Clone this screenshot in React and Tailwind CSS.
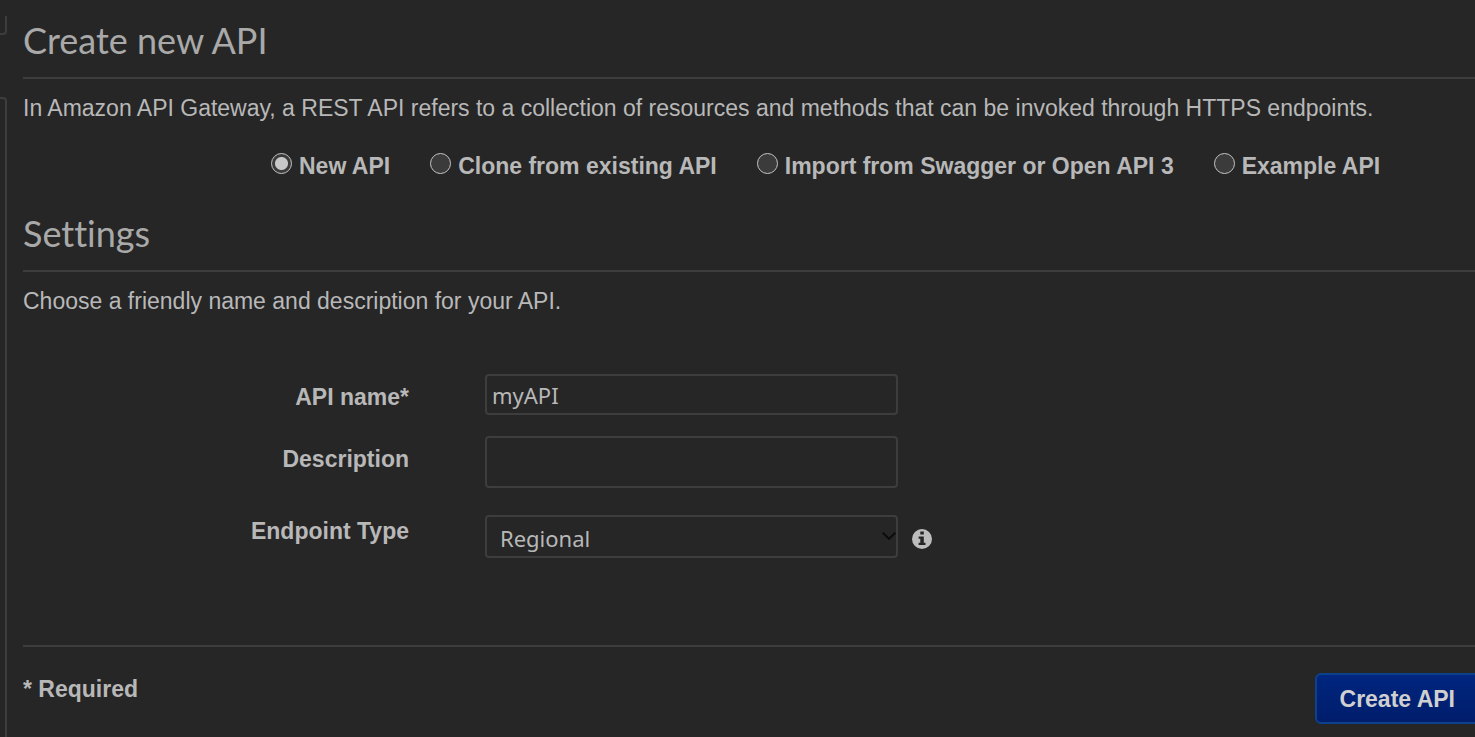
import React from "react";

const SOURCES = [
  { id: "new", label: "New API" },
  { id: "clone", label: "Clone from existing API" },
  { id: "import", label: "Import from Swagger or Open API 3" },
  { id: "example", label: "Example API" },
];

function SectionTitle({ as: Tag, children }) {
  return (
    <Tag className="border-b-2 border-[#3d3d3d] pb-[13px] font-['Lato',sans-serif] text-4xl leading-[48px] text-[#a9a9a9] [font-variant-ligatures:none]">
      {children}
    </Tag>
  );
}

function Label({ htmlFor, className = "pt-[7px]", children }) {
  return (
    <label
      htmlFor={htmlFor}
      className={`w-[386px] shrink-0 text-right leading-8 font-bold ${className}`}
    >
      {children}
    </label>
  );
}

function InfoIcon() {
  return (
    <svg viewBox="0 0 20 20" className="size-5" aria-hidden="true">
      <circle cx="10" cy="10" r="10" fill="#bdbdbd" />
      <path
        fill="#262626"
        d="M8.3 2.6h3.5v2.8H8.3zM6.6 7.4h5.2v6.3h1.7v2.4H6.6v-2.4h1.7V9.8H6.6z"
      />
    </svg>
  );
}

export default function App() {
  return (
    <div className="flex min-h-screen overflow-hidden bg-[#262626] font-['Liberation_Sans',Arial,sans-serif] text-[23px] leading-9 text-[#b8b8b8]">
      <aside className="flex w-[7px] shrink-0 flex-col gap-[62px] pt-4">
        <div className="h-[19px] rounded-br-sm border-r-2 border-b-2 border-[#3d3d3d]" />
        <div className="grow rounded-tr-sm border-t-2 border-r-2 border-[#3d3d3d]" />
      </aside>

      <main className="min-w-0 grow pt-4 pl-4">
        <SectionTitle as="h1">Create new API</SectionTitle>
        <p className="pt-[11px] whitespace-nowrap">
          In Amazon API Gateway, a REST API refers to a collection of resources and methods that can
          be invoked through HTTPS endpoints.
        </p>

        <div className="flex gap-10 pt-[22px] pl-[248px] font-bold whitespace-nowrap">
          {SOURCES.map((source) => (
            <label key={source.id} className="flex items-start gap-[7px]">
              <input
                type="radio"
                name="source"
                value={source.id}
                defaultChecked={source.id === "new"}
                className="mt-[5px] size-[21px] shrink-0 appearance-none rounded-full border border-[#c4c4c4] bg-[#3b3b3b] checked:bg-[radial-gradient(circle,#c8c8c8_6px,#3b3b3b_7px)]"
              />
              {source.label}
            </label>
          ))}
        </div>

        <div className="pt-[25px]">
          <SectionTitle as="h2">Settings</SectionTitle>
        </div>
        <p className="pt-[11px]">Choose a friendly name and description for your API.</p>

        <form>
          <div className="flex pt-[55px]">
            <Label htmlFor="api-name">API name*</Label>
            <input
              id="api-name"
              type="text"
              defaultValue="myAPI"
              className="ml-19 h-[41px] w-[413px] rounded border-2 border-[#3d3d3d] bg-transparent px-[5px] font-['Noto_Sans',sans-serif] text-[22px]"
            />
          </div>
          <div className="flex pt-[21px]">
            <Label htmlFor="description">Description</Label>
            <textarea
              id="description"
              className="ml-19 h-[52px] w-[413px] resize-none rounded border-2 border-[#3d3d3d] bg-transparent px-[5px] font-['Noto_Sans',sans-serif] text-[22px]"
            />
          </div>
          <div className="flex pt-[27px]">
            <Label htmlFor="endpoint-type" className="pt-0">
              Endpoint Type
            </Label>
            <div className="relative ml-19">
              <select
                id="endpoint-type"
                className="block h-[43px] w-[413px] appearance-none rounded border-2 border-[#3d3d3d] bg-transparent px-[13px] pt-0.5 font-['Noto_Sans',sans-serif] text-[22px]"
              >
                <option>Regional</option>
              </select>
              <svg
                viewBox="0 0 14 8"
                className="pointer-events-none absolute top-[17px] right-[2px] h-2 w-3.5"
                fill="none"
                stroke="#0c0c0c"
                strokeWidth="2"
                aria-hidden="true"
              >
                <path d="M.7 .7 7 6.8 13.3 .7" />
              </svg>
            </div>
            <button type="button" aria-label="About endpoint types" className="ml-3.5 self-start pt-[14px]">
              <InfoIcon />
            </button>
          </div>

          <footer className="mt-[87px] flex items-start justify-between border-t-2 border-[#3d3d3d] pt-[26px]">
            <p className="leading-8 font-bold">* Required</p>
            <button
              type="submit"
              className="-mr-[5px] h-[51px] rounded-md border-2 border-[#0c428c] bg-linear-to-b from-[#00267f] to-[#001d6b] px-[23px] font-bold text-[#d0d0d0]"
            >
              Create API
            </button>
          </footer>
        </form>
      </main>
    </div>
  );
}
